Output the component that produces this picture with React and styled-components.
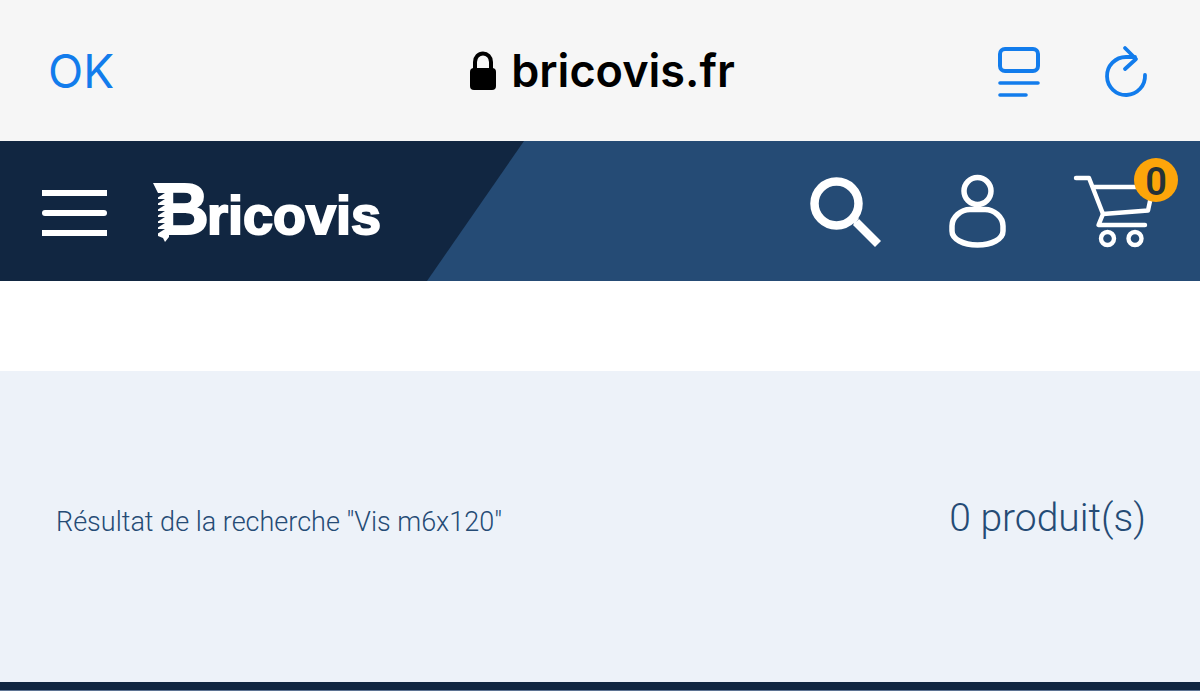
import React from "react";
import styled, { createGlobalStyle } from "styled-components";

const color = {
  link: "#127cec",
  chrome: "#f6f6f6",
  navy: "#112641",
  blue: "#254b75",
  amber: "#fda50a",
  panel: "#edf2f9",
};

const GlobalStyle = createGlobalStyle`
  * { box-sizing: border-box; }
  body { margin: 0; background: #fff; }
`;

const Page = styled.div`
  display: flex;
  flex-direction: column;
  min-height: 100vh;
`;

const IconButton = styled.button`
  position: relative;
  display: flex;
  padding: 0;
  border: 0;
  background: none;
  color: inherit;
  cursor: pointer;
`;

const BrowserBar = styled.div`
  display: grid;
  grid-template-columns: 1fr auto 1fr;
  align-items: center;
  height: 141px;
  padding: 0 50px 0 48px;
  background: ${color.chrome};
  color: ${color.link};
  font-family: Inter, sans-serif;
`;

const DoneButton = styled.button`
  justify-self: start;
  padding: 0;
  border: 0;
  background: none;
  color: inherit;
  font: 400 46px/60px Inter, sans-serif;
  cursor: pointer;
`;

const Address = styled.div`
  display: flex;
  align-items: center;
  gap: 14px;
  padding-left: 6px;
  color: #000;
  font-size: 45px;
  font-weight: 600;
  line-height: 60px;
`;

const BrowserActions = styled.div`
  display: flex;
  justify-content: flex-end;
  gap: 62px;
`;

const Header = styled.header`
  display: flex;
  justify-content: space-between;
  height: 140px;
  background: ${color.blue};
  color: #fff;
`;

const Brand = styled.div`
  display: flex;
  align-items: center;
  gap: 46px;
  width: 524px;
  padding-left: 42px;
  background: ${color.navy};
  clip-path: polygon(0 0, 100% 0, calc(100% - 97px) 100%, 0 100%);
`;

const Logo = styled.a`
  position: relative;
  display: flex;
  align-items: baseline;
  padding-top: 2px;
  color: inherit;
  font: 700 54px/80px "Liberation Sans", sans-serif;
  text-decoration: none;
  -webkit-text-stroke: 2px currentColor;
`;

const Initial = styled.span`
  padding-left: 4px;
  margin-right: -2px;
  font-size: 72px;
`;

const Thread = styled.svg`
  position: absolute;
  left: 0;
  bottom: 13px;
  z-index: 1;
`;

const Tools = styled.nav`
  display: flex;
  align-items: center;
  gap: 66px;
  padding-right: 22px;
`;

const Badge = styled.span`
  position: absolute;
  top: -13px;
  right: 0;
  width: 44px;
  height: 44px;
  border-radius: 50%;
  background: ${color.amber};
  color: #263238;
  font: 600 38px/48px Roboto, sans-serif;
  text-align: center;
`;

const Results = styled.main`
  display: flex;
  flex: 1;
  align-items: baseline;
  justify-content: space-between;
  margin-top: 90px;
  padding: 123px 54px 120px 56px;
  background: ${color.panel};
  color: ${color.blue};
  font-family: Roboto, sans-serif;
`;

const Query = styled.h1`
  margin: 0;
  font-size: 27px;
  font-weight: 350;
  line-height: 40px;
`;

const Count = styled.p`
  margin: 0;
  font-size: 39px;
  font-weight: 350;
  line-height: 48px;
`;

const Footer = styled.footer`
  height: 9px;
  background: ${color.navy};
  border-bottom: 1px solid #5f7493;
`;

const LockIcon = () => (
  <svg width="28" height="40" viewBox="0 0 28 40" aria-hidden="true">
    <path d="M6 20V11a8 8.500 0 0 1 16 0v9" fill="none" stroke="currentColor" strokeWidth="4" />
    <rect x="1" y="17" width="26" height="22" rx="4" fill="currentColor" />
  </svg>
);

const ReaderIcon = () => (
  <svg width="44" height="54" viewBox="0 0 44 54" fill="none" stroke="currentColor" strokeWidth="4" strokeLinecap="round">
    <rect x="2" y="5" width="38" height="22" rx="5" />
    <path d="M2 39h38M2 51h26" strokeWidth="3.600" />
  </svg>
);

const ReloadIcon = () => (
  <svg width="46" height="54" viewBox="-2 0 46 54" fill="none" stroke="currentColor" strokeWidth="3.800" strokeLinecap="round" strokeLinejoin="round">
    <path d="M39 31A19 19 0 1 1 20 13H29" />
    <path d="M19 4l11 11-11 10" />
  </svg>
);

const MenuIcon = () => (
  <svg width="65" height="52" viewBox="0 0 65 52" fill="currentColor">
    <rect y="5" width="65" height="6" />
    <rect y="25" width="65" height="6" rx="3" />
    <rect y="45" width="65" height="6" />
  </svg>
);

const SearchIcon = () => (
  <svg width="72" height="80" viewBox="0 0 72 80" fill="none" stroke="currentColor">
    <circle cx="26.500" cy="32.500" r="22" strokeWidth="8.500" />
    <path d="M46 51L68 73" strokeWidth="8.500" />
    <path d="M43 49L49 47 44 55Z" fill="currentColor" stroke="none" />
  </svg>
);

const UserIcon = () => (
  <svg width="58" height="80" viewBox="0 0 58 80" fill="none" stroke="currentColor" strokeWidth="5.500">
    <circle cx="29.500" cy="20" r="13.500" />
    <path d="M22 38.500H37C46 38.500 55 46 55 55V60C55 68 44 74 29.500 74S4 68 4 60V55C4 46 13 38.500 22 38.500Z" />
  </svg>
);

const CartIcon = () => (
  <svg width="106" height="80" viewBox="0 0 106 80" fill="none" stroke="currentColor" strokeWidth="4.400" strokeLinecap="round" strokeLinejoin="round">
    <path d="M4 7H17L31 43 76 39.500 81 16H21" />
    <path d="M31 43L26.500 54H73" />
    <circle cx="35.500" cy="67.500" r="6.500" />
    <circle cx="63" cy="67.500" r="6.500" />
  </svg>
);

const threads = [15, 21, 27, 33, 39, 45, 51];

const ScrewThread = () => (
  <Thread width="20" height="60" viewBox="0 0 20 60" aria-hidden="true">
    <path d="M0 1H16V55L12 60 10 56 5 54V11Z" fill="#fff" />
    {threads.map((y) => (
      <path key={y} d={`M4 ${y - 4}V${y + 1}L12 ${y - 4}Z`} fill={color.navy} />
    ))}
  </Thread>
);

export default function App() {
  return (
    <Page>
      <GlobalStyle />
      <BrowserBar>
        <DoneButton>OK</DoneButton>
        <Address>
          <LockIcon />
          <span>bricovis.fr</span>
        </Address>
        <BrowserActions>
          <IconButton aria-label="Lecteur"><ReaderIcon /></IconButton>
          <IconButton aria-label="Recharger"><ReloadIcon /></IconButton>
        </BrowserActions>
      </BrowserBar>
      <Header>
        <Brand>
          <IconButton aria-label="Menu"><MenuIcon /></IconButton>
          <Logo href="#">
            <ScrewThread />
            <Initial>B</Initial>
            <span>ricovis</span>
          </Logo>
        </Brand>
        <Tools>
          <IconButton aria-label="Rechercher"><SearchIcon /></IconButton>
          <IconButton aria-label="Mon compte"><UserIcon /></IconButton>
          <IconButton aria-label="Panier">
            <CartIcon />
            <Badge>0</Badge>
          </IconButton>
        </Tools>
      </Header>
      <Results>
        <Query>Résultat de la recherche "Vis m6x120"</Query>
        <Count>0 produit(s)</Count>
      </Results>
      <Footer />
    </Page>
  );
}
